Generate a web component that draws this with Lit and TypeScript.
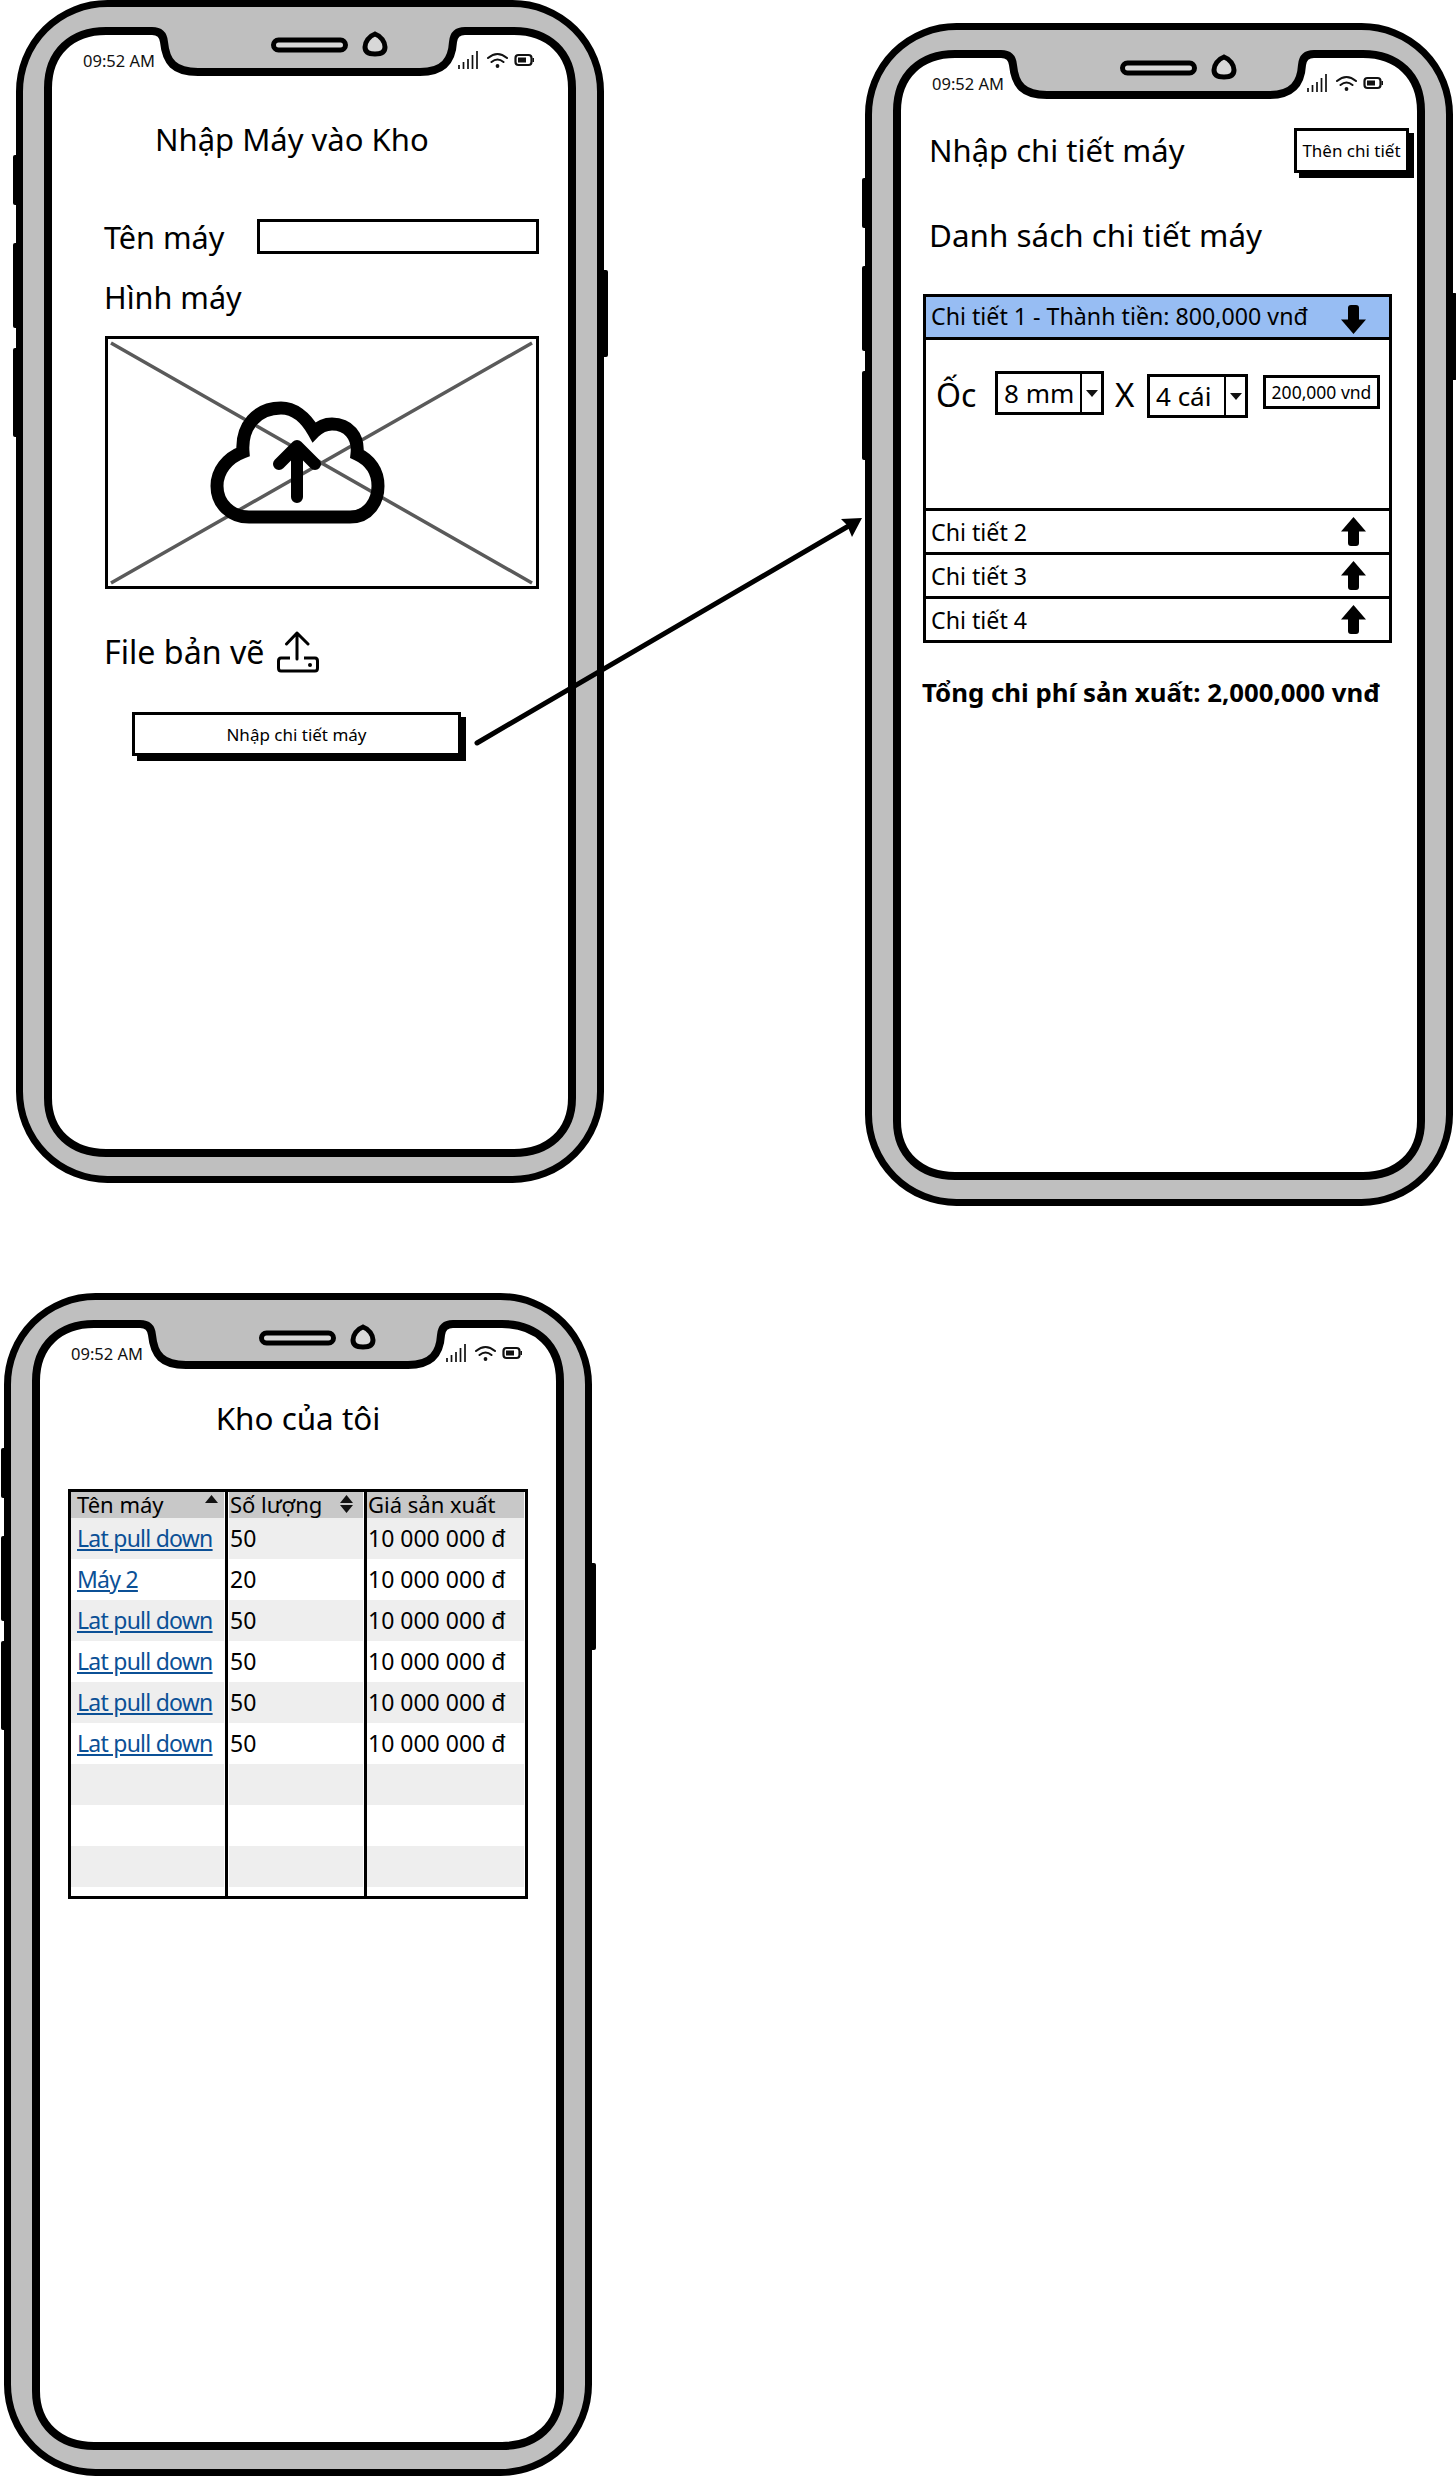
import { LitElement, html, css } from "lit";
import { customElement } from "lit/decorators.js";

const FRAME_INNER =
  "M32 88 C32 52 56 31 90 31 H136 Q147 31 148 42 C150 62 158 72 182 72 H404 C428 72 436 60 437 42 Q438 31 449 31 H498 C532 31 556 52 556 88 V1098 C556 1132 532 1153 498 1153 H90 C56 1153 32 1132 32 1098 Z";

const statusIcons = html`<svg class="status-icons" viewBox="0 0 76 20" aria-hidden="true">
  <g stroke="#111" stroke-width="1.7" fill="none">
    <path d="M1 19V15M5.5 19V12M10 19V9M14.5 19V5M19 19V1" />
    <path stroke-width="2" stroke-linecap="round" d="M30 8Q39.5 0 49 8M33.5 12Q39.5 7 45.5 12" />
    <rect x="57.5" y="5" width="16" height="10" rx="3" stroke-width="2.2" />
  </g>
  <circle cx="39.5" cy="16" r="1.9" fill="#111" />
  <rect x="60" y="7.5" width="8" height="5" fill="#111" />
  <rect x="74.5" y="8" width="1.5" height="4" fill="#111" />
</svg>`;

const arrowUp = html`<svg class="arrow" viewBox="0 0 25 29" aria-hidden="true">
  <path d="M12.5 0L25 14.5H18V26Q18 29 15 29H10Q7 29 7 26V14.5H0Z" fill="#000" />
</svg>`;
const arrowDown = html`<svg class="arrow" viewBox="0 0 25 29" aria-hidden="true">
  <path d="M12.5 29L25 14.5H18V3Q18 0 15 0H10Q7 0 7 3V14.5H0Z" fill="#000" />
</svg>`;

const caret = html`<svg class="caret" viewBox="0 0 12 7" aria-hidden="true"><path d="M0 0H12L6 7Z" fill="#111" /></svg>`;

@customElement("phone-shell")
class PhoneShell extends LitElement {
  static styles = css`
    :host { display: block; position: relative; width: 588px; height: 1183px; }
    .frame { position: absolute; left: 0; top: 0; width: 588px; height: 1183px; overflow: visible; }
    .screen { position: absolute; inset: 0; display: flex; flex-direction: column; }
    .status { display: flex; justify-content: space-between; align-items: center; height: 22px; margin-top: 49px; margin-bottom: 1px; padding: 0 70px 0 67px; font-size: 16.5px; color: #111; }
    .status-icons { width: 76px; height: 20px; }
  `;
  render() {
    return html`
      <svg class="frame" viewBox="0 0 588 1183" aria-hidden="true">
        <g fill="#000">
          <rect x="-3" y="155" width="5" height="50" rx="2" />
          <rect x="-3" y="243" width="5" height="85" rx="2" />
          <rect x="-3" y="348" width="5" height="89" rx="2" />
          <rect x="586" y="270" width="6" height="87" rx="2" />
        </g>
        <rect x="3.5" y="3.5" width="581" height="1176" rx="88" fill="#bfbfbf" stroke="#000" stroke-width="7" />
        <path d="${FRAME_INNER}" fill="#fff" stroke="#000" stroke-width="8" stroke-linejoin="round" />
        <rect x="257.5" y="40" width="72" height="10" rx="5" fill="#d8d8d8" stroke="#000" stroke-width="5" />
        <path d="M359 34C353 36 349 42 349 47C349 52 353 54 359 54C365 54 369 52 369 47C369 42 365 36 359 34Z" fill="#d8d8d8" stroke="#000" stroke-width="5" />
      </svg>
      <div class="screen">
        <div class="status"><span>09:52 AM</span>${statusIcons}</div>
        <slot></slot>
      </div>`;
  }
}

@customElement("app-root")
class AppRoot extends LitElement {
  static styles = css`
    :host { display: block; position: relative; width: 1456px; height: 2476px; overflow: hidden; background: #fff; font-family: "Noto Sans", sans-serif; color: #000; }
    phone-shell { position: absolute; font-family: "Noto Sans", sans-serif; }
    .p1 { left: 16px; top: 0; }
    .p2 { left: 865px; top: 23px; }
    .p3 { left: 4px; top: 1293px; }
    .connector { position: absolute; left: 0; top: 0; width: 1456px; height: 2476px; pointer-events: none; }

    .title { font-size: 31px; line-height: 40px; height: 40px; white-space: nowrap; }
    .title.big { font-size: 31.4px; }

    /* screen 1 */
    .form { display: flex; flex-direction: column; margin-left: 89px; width: 434px; }
    .form .title { margin: 47px 0 0 50px; }
    .name-row { display: flex; justify-content: space-between; align-items: center; margin-top: 60px; height: 35px; }
    .label { font-size: 30.6px; line-height: 34px; white-space: nowrap; margin-left: -1px; }
    .label.file { font-size: 32.2px; }
    .input { box-sizing: border-box; width: 282px; height: 35px; border: 3px solid #000; background: #fff; }
    .pic-label { margin-top: 26px; }
    .pic { display: block; margin-top: 22px; width: 434px; height: 253px; }
    .file-row { display: flex; align-items: center; gap: 13px; height: 42px; margin-top: 42px; margin-bottom: 1px; }
    .file-icon { width: 42px; height: 42px; }
    .btn { box-sizing: border-box; display: flex; align-items: center; justify-content: center; background: #fff; border: 3px solid #000; box-shadow: 5px 5px 0 #000; font-size: 17px; white-space: nowrap; }
    .btn-main { margin: 38px 0 0 27px; width: 329px; height: 44px; }

    /* screen 2 */
    .detail { display: flex; flex-direction: column; margin-left: 58px; width: 491px; }
    .detail-head { display: flex; justify-content: space-between; align-items: flex-start; margin-top: 33px; height: 50px; padding: 0 5px 0 6px; }
    .detail-head .title { margin-top: 2px; }
    .btn-add { width: 115px; height: 45px; }
    .list-title { margin: 37px 0 0 6px; }
    .acc { box-sizing: border-box; width: 469px; height: 349px; margin-top: 39px; border: 3px solid #000; display: flex; flex-direction: column; }
    .acc-row { display: flex; align-items: center; justify-content: space-between; padding: 0 23px 0 5px; font-size: 23.2px; white-space: nowrap; box-sizing: border-box; height: 44px; border-top: 3px solid #000; }
    .acc-head { height: 40px; border-top: 0; background: #97bdf3; padding-bottom: 2px; }
    .acc-head .arrow { margin-top: 6px; }
    .arrow { display: block; width: 25px; height: 29px; flex: none; }
    .acc-body { box-sizing: border-box; height: 171px; border-top: 3px solid #000; display: flex; align-items: flex-start; padding: 31px 0 0 10px; }
    .oc { width: 52px; font-size: 32px; line-height: 36px; margin-top: 6px; }
    .combo { box-sizing: border-box; display: flex; height: 44px; border: 3px solid #000; font-size: 26px; white-space: nowrap; margin-left: 7px; }
    .combo span { display: flex; align-items: center; padding-left: 6px; border-right: 2.5px solid #000; box-sizing: border-box; }
    .combo .btn-c { flex: 1; display: flex; align-items: center; justify-content: center; }
    .caret { width: 12px; height: 7px; }
    .c1 { width: 109px; }
    .c1 span { width: 84px; }
    .x { font-size: 33px; line-height: 44px; width: 32px; margin-left: 11px; margin-top: 2px; }
    .c2 { width: 101px; margin: 3px 0 0 0; }
    .c2 span { width: 76px; }
    .amount { box-sizing: border-box; width: 117px; height: 34px; margin: 4px 0 0 15px; border: 3px solid #000; display: flex; align-items: center; justify-content: center; font-size: 17.5px; white-space: nowrap; }
    .total { margin-top: 31px; font-size: 25.8px; line-height: 36px; font-weight: 700; white-space: nowrap; margin-left: -1px; }

    /* screen 3 */
    .stock { display: flex; flex-direction: column; margin-left: 64px; width: 460px; }
    .stock .title { margin-top: 33px; text-align: center; margin-left: 0; }
    .tbl { box-sizing: border-box; width: 460px; height: 410px; margin-top: 51px; border: 3px solid #000; display: flex; flex-direction: column; }
    .tr { display: grid; grid-template-columns: 153px 5px 134px 4px 157px; height: 41px; font-size: 23px; }
    .tr.odd .td { background: #eeeeee; }
    .th { height: 26px; font-size: 22px; line-height: 24px; }
    .th .td { background: #c8c8c8; }
    .filler { height: 9px; }
    .td { display: flex; align-items: center; justify-content: space-between; padding-left: 1px; padding-bottom: 2px; box-sizing: border-box; white-space: nowrap; min-width: 0; }
    .td.first { padding-left: 6px; }
    .th .td { padding-right: 6px; }
    .th .td.mid { padding-right: 10px; }
    .rule { justify-self: center; width: 3px; background: #000; }
    a { color: #0b5096; text-decoration: underline; letter-spacing: -0.75px; }
    .sort { width: 13px; height: 18px; flex: none; }
  `;

  private rows = [
    ["Lat pull down", "50", "10 000 000 đ"],
    ["Máy 2", "20", "10 000 000 đ"],
    ["Lat pull down", "50", "10 000 000 đ"],
    ["Lat pull down", "50", "10 000 000 đ"],
    ["Lat pull down", "50", "10 000 000 đ"],
    ["Lat pull down", "50", "10 000 000 đ"],
    ["", "", ""],
    ["", "", ""],
    ["", "", ""],
  ];

  render() {
    return html`
      <phone-shell class="p1">
        <div class="form">
          <div class="title">Nhập Máy vào Kho</div>
          <div class="name-row"><span class="label">Tên máy</span><div class="input"></div></div>
          <div class="label pic-label">Hình máy</div>
          <svg class="pic" viewBox="0 0 434 253" aria-label="Hình máy">
            <rect x="1.5" y="1.5" width="431" height="250" fill="#fff" stroke="#000" stroke-width="3" />
            <path d="M6 7L427 247M427 7L6 247" stroke="#5a5a5a" stroke-width="3.5" fill="none" />
            <path d="M144 181H245C264 181 273 165 273 150C273 135 265 124 252 118C254 100 243 88 227 88C220 88 214 91 209 96C200 80 188 72 176 72C152 72 136 90 138 116C122 122 112 135 112 150C112 168 126 181 144 181Z" fill="none" stroke="#000" stroke-width="13" />
            <path d="M192 161V110M174 128L192 110L210 128" fill="none" stroke="#000" stroke-width="12" stroke-linecap="round" stroke-linejoin="round" />
          </svg>
          <div class="file-row">
            <span class="label file">File bản vẽ</span>
            <svg class="file-icon" viewBox="0 0 42 42" aria-hidden="true">
              <path d="M20 28V2M9.5 13L20 2L31 13" fill="none" stroke="#000" stroke-width="3" stroke-linecap="round" stroke-linejoin="round" />
              <path d="M13 27H4Q1.5 27 1.5 30V37Q1.5 40 4 40H38Q40.5 40 40.5 37V30Q40.5 27 38 27H27" fill="none" stroke="#000" stroke-width="3" />
              <circle cx="33" cy="34" r="2" fill="#000" />
            </svg>
          </div>
          <div class="btn btn-main">Nhập chi tiết máy</div>
        </div>
      </phone-shell>

      <phone-shell class="p2">
        <div class="detail">
          <div class="detail-head">
            <div class="title">Nhập chi tiết máy</div>
            <div class="btn btn-add">Thên chi tiết</div>
          </div>
          <div class="title big list-title">Danh sách chi tiết máy</div>
          <div class="acc">
            <div class="acc-row acc-head"><span>Chi tiết 1 - Thành tiền: 800,000 vnđ</span>${arrowDown}</div>
            <div class="acc-body">
              <span class="oc">Ốc</span>
              <div class="combo c1"><span>8 mm</span><div class="btn-c">${caret}</div></div>
              <div class="x">X</div>
              <div class="combo c2"><span>4 cái</span><div class="btn-c">${caret}</div></div>
              <div class="amount">200,000 vnd</div>
            </div>
            <div class="acc-row"><span>Chi tiết 2</span>${arrowUp}</div>
            <div class="acc-row"><span>Chi tiết 3</span>${arrowUp}</div>
            <div class="acc-row"><span>Chi tiết 4</span>${arrowUp}</div>
          </div>
          <div class="total">Tổng chi phí sản xuất: 2,000,000 vnđ</div>
        </div>
      </phone-shell>

      <phone-shell class="p3">
        <div class="stock">
          <div class="title big">Kho của tôi</div>
          <div class="tbl">
            <div class="tr th">
              <div class="td first">Tên máy<svg class="sort" viewBox="0 0 13 18" aria-hidden="true"><path d="M0 8L6.5 0L13 8Z" fill="#111" /></svg></div>
              <i class="rule"></i>
              <div class="td mid">Số lượng<svg class="sort" viewBox="0 0 13 18" aria-hidden="true"><path d="M0 8L6.5 0L13 8ZM0 10L6.5 18L13 10Z" fill="#111" /></svg></div>
              <i class="rule"></i>
              <div class="td">Giá sản xuất</div>
            </div>
            ${this.rows.map(
              (r, i) => html`<div class="tr ${i % 2 === 0 ? "odd" : ""}">
                <div class="td first">${r[0] ? html`<a href="#">${r[0]}</a>` : ""}</div>
                <i class="rule"></i>
                <div class="td">${r[1]}</div>
                <i class="rule"></i>
                <div class="td">${r[2]}</div>
              </div>`
            )}
            <div class="tr filler">
              <div class="td"></div><i class="rule"></i><div class="td"></div><i class="rule"></i><div class="td"></div>
            </div>
          </div>
        </div>
      </phone-shell>

      <svg class="connector" viewBox="0 0 1456 2476" aria-hidden="true">
        <path d="M477 743L852 524" stroke="#000" stroke-width="5" stroke-linecap="round" fill="none" />
        <path d="M862 518L841 519L847 525L852 537Z" fill="#000" />
      </svg>
    `;
  }
}
void PhoneShell; void AppRoot;
